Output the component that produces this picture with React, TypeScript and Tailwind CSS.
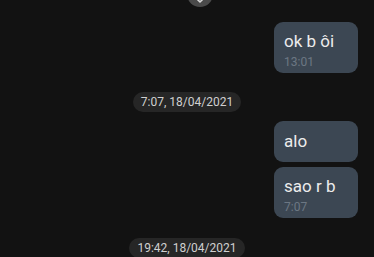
import React from 'react'

type Msg = { text: string; time?: string }

function Bubble({ text, time }: Msg) {
  return (
    <div className="self-end mr-4 w-[84px] rounded-[9px] bg-[#3c4753] pl-[10px] pr-2">
      <div className={time ? 'pt-[7px] text-[17px] leading-6 text-[#ececec]' : 'pt-[8px] pb-[9px] text-[17px] leading-6 text-[#ececec]'}>
        {text}
      </div>
      {time && <div className="pt-[1px] pb-[3px] text-[12px] leading-4 text-[#6c7783]">{time}</div>}
    </div>
  )
}

function DateChip({ label }: { label: string }) {
  return (
    <div className="self-center rounded-full bg-[#262626] px-2 text-[12px] leading-5 text-[#d0d0d0]">
      {label}
    </div>
  )
}

export default function App() {
  return (
    <div
      className="relative h-[257px] w-[374px] overflow-hidden bg-[#121212] flex flex-col"
      style={{ fontFamily: 'Roboto, "Noto Sans", sans-serif' }}
    >
      {/* scroll-down button, cut off by the top edge */}
      <div className="absolute left-[187px] top-[-19px] flex h-[26px] w-[26px] items-end justify-center rounded-full bg-[#4a4a4a] pb-[4px]">
        <svg width="10" height="6" viewBox="0 0 10 6" fill="none">
          <path d="M1 1l4 4 4-4" stroke="#d8d8d8" strokeWidth="1.6" strokeLinecap="round" strokeLinejoin="round" />
        </svg>
      </div>

      <div className="mt-[22px] flex flex-col">
        <Bubble text="ok b ôi" time="13:01" />
      </div>
      <div className="mt-[19px] flex flex-col">
        <DateChip label="7:07, 18/04/2021" />
      </div>
      <div className="mt-[9px] flex flex-col gap-[5px]">
        <Bubble text="alo" />
        <Bubble text="sao r b" time="7:07" />
      </div>
      <div className="mt-[20px] flex flex-col">
        <DateChip label="19:42, 18/04/2021" />
      </div>
    </div>
  )
}
